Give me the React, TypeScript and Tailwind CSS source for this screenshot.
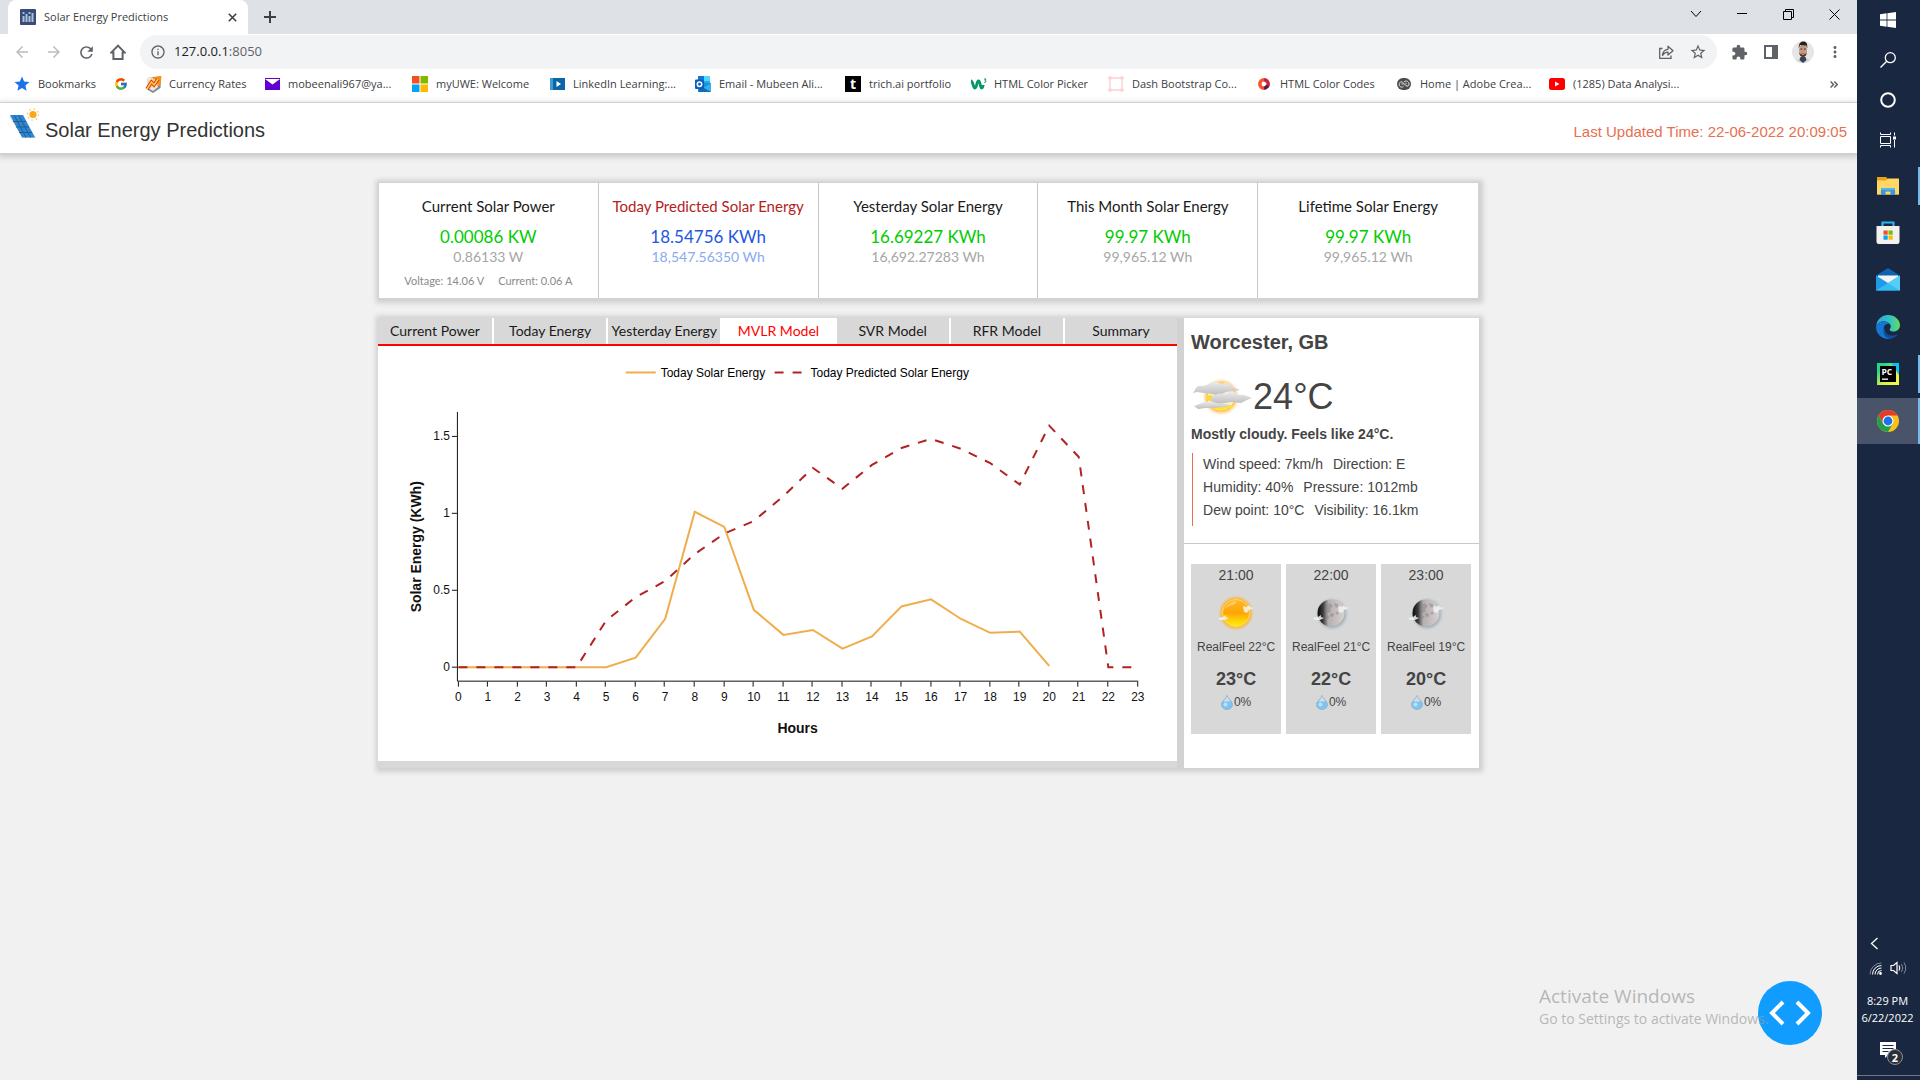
import React from "react";
import { FcGoogle } from "react-icons/fc";
import {
  MdArrowBack,
  MdArrowForward,
  MdExtension,
  MdInfoOutline,
  MdMoreVert,
  MdRefresh,
  MdStar,
  MdStarBorder,
} from "react-icons/md";

/* ---------- Browser icons ---------- */

const DashFavicon = () => (
  <svg width="16" height="16" viewBox="0 0 16 16">
    <rect width="16" height="16" rx="1" fill="#3b4a76" />
    <g fill="#a9c4dc">
      <rect x="2.5" y="7" width="2" height="6" />
      <rect x="5.5" y="5" width="2" height="8" />
      <rect x="8.5" y="7" width="2" height="6" />
      <rect x="11.5" y="4" width="2" height="9" />
    </g>
    <g fill="#7fd0d8">
      <rect x="2.5" y="3" width="2" height="2" />
      <rect x="8.5" y="3" width="2" height="2" />
    </g>
  </svg>
);

const HomeIcon = () => (
  <svg width="16" height="16" viewBox="0 0 16 16" fill="none" stroke="#5f6368" strokeWidth="2">
    <path d="M1.200 8.600 8 1.600l6.800 7H12.600V15H3.400V8.600Z" strokeLinejoin="miter" />
  </svg>
);

const ShareIcon = () => (
  <svg width="16" height="16" viewBox="0 0 16 16" fill="none" stroke="#5f6368" strokeWidth="1.3">
    <path d="M4.500 4.500H1.700V14.300H13V11.500" />
    <path d="M4.500 11.500C4.800 7.500 7 5.500 10 5.300V2.200L15 6.700 10 11V8.100C7.500 8 6 9 4.500 11.500Z" strokeLinejoin="round" />
  </svg>
);

const SidePanelIcon = () => (
  <svg width="14" height="14" viewBox="0 0 14 14">
    <path d="M0 0h14v14H0zM2 2v10h6V2z" fill="#5f6368" fillRule="evenodd" />
  </svg>
);

const Avatar = () => (
  <svg width="22" height="22" viewBox="0 0 22 22">
    <defs>
      <clipPath id="avatarClip"><circle cx="11" cy="11" r="11" /></clipPath>
    </defs>
    <g clipPath="url(#avatarClip)">
      <rect width="22" height="22" fill="#e6e6e8" />
      <path d="M3 22c1-4 4-5 8-5s7 1 8 5z" fill="#d5d8e0" />
      <path d="M8.500 16h5l1 3-3.500 3-3.500-3z" fill="#3b4152" />
      <ellipse cx="11" cy="9.500" rx="4" ry="6.500" fill="#c69a82" />
      <path d="M6.800 7.500C6.500 2 9 .500 11.500.500 14.500.500 15.700 3 15.200 7.500L14.200 4.500 8 4z" fill="#26211f" />
      <path d="M7.200 11.500c.3 6 7.300 6 7.600 0l-1.500 1.700q-2.300-1.400-4.600 0z" fill="#4a3730" />
      <path d="M8.500 8h1.700M12 8h1.700" stroke="#3a2a24" />
      <path d="M9.700 13.500h2.600" stroke="#c48a78" strokeWidth="1" />
    </g>
  </svg>
);

/* ---------- Bookmark icons ---------- */

const RatesIcon = () => (
  <svg width="17" height="17" viewBox="0 0 17 17">
    <path d="M2 2 16 .500 15.500 12 8 17l-5-3z" fill="#7f8b8c" />
    <path d="M1.500 2 13 1.500 13 11l-5 4-5-3z" fill="#f1e6d6" />
    <path d="m7 1 9.500-1-1 9-3 1z" fill="#f4921c" />
    <path d="M3 4.500 10 3l3 6-5 1-4 3z" fill="#f7c9a0" />
    <path d="m2 13 4.500-7 2.500 3 4-6" fill="none" stroke="#d8301c" strokeWidth="3.400" />
    <path d="m2 13 4.500-7 2.500 3 4-6" fill="none" stroke="#ffd23c" strokeWidth="1.600" />
  </svg>
);
const MailPurple = () => (
  <svg width="15" height="12" viewBox="0 0 15 12"><path d="M0 0h15v12H0z" fill="#5f01d1" /><path d="M0 1h15L7.500 6.500z" fill="#fff" /></svg>
);
const MicrosoftIcon = () => (
  <svg width="16" height="16" viewBox="0 0 16 16">
    <path d="M0 0h7.500v7.500H0z" fill="#f25022" /><path d="M8.500 0H16v7.500H8.500z" fill="#7fba00" />
    <path d="M0 8.500h7.500V16H0z" fill="#00a4ef" /><path d="M8.500 8.500H16V16H8.500z" fill="#ffb900" />
  </svg>
);
const LearningIcon = () => (
  <svg width="15" height="12" viewBox="0 0 15 12"><rect width="15" height="12" fill="#3f9bd0" /><rect x="3" width="12" height="12" fill="#0a66a8" /><path d="M6.500 3v6L11 6z" fill="#fff" /></svg>
);
const OutlookIcon = () => (
  <svg width="16" height="16" viewBox="0 0 16 16">
    <path d="M3 0h12v11H3z" fill="#28a8ea" /><path d="M9 0h6v5H9z" fill="#50d9ff" /><path d="M3 0h6v4H3z" fill="#0f78d4" />
    <path d="M3 7h13v9H3z" fill="#1490df" /><path d="m16 7-8 5-4-3v7h12z" fill="#35b0ee" /><path d="m4 9 12 7H4z" fill="#0f6cbd" />
    <rect y="3.500" width="9" height="9.500" rx="1" fill="#0a5ebd" /><circle cx="4.500" cy="8.200" r="2.200" fill="none" stroke="#fff" strokeWidth="1.500" />
  </svg>
);
const TrichIcon = () => (
  <span className="flex size-4 items-center justify-center bg-black font-['Open_Sans',sans-serif] text-sm leading-4 font-bold text-white">t</span>
);
const W3Icon = () => (
  <svg width="17" height="12" viewBox="0 0 17 12" fill="none" stroke="#059862">
    <path d="M1 3c2 0 2 7 4 7s1.500-7 3.500-7 1.500 7 3 7 1.500-2 1.500-3" strokeWidth="2.800" /><path d="M14 1h2l-1 1.500c2 0 1 2.500-1 1.700" strokeWidth="1" />
  </svg>
);
const DbcIcon = () => (
  <svg width="16" height="16" viewBox="0 0 16 16" fill="#fbd0cd">
    <path d="M2 2h12v12H2z" fill="none" stroke="#fbd0cd" strokeWidth="1.300" />
    <circle cx="2" cy="2" r="1.800" /><circle cx="14" cy="2" r="1.800" /><circle cx="2" cy="14" r="1.800" /><circle cx="14" cy="14" r="1.800" />
  </svg>
);
const ColorCodesIcon = () => (
  <svg width="12" height="12" viewBox="0 0 12 12" fill="none" strokeWidth="3.500">
    <path d="M6 1.800a4.200 4.200 0 0 0 0 8.400" stroke="#f4572f" /><path d="M6 1.800a4.200 4.200 0 0 1 3 7.100" stroke="#c5283a" /><path d="M9.500 7.500A4.200 4.200 0 0 1 6 10.200" stroke="#5b1a4a" />
  </svg>
);
const CreativeIcon = () => (
  <svg width="14" height="12" viewBox="0 0 14 12" fill="none">
    <rect width="14" height="12" rx="6" fill="#4b4b4b" />
    <path d="M6.500 8.700C3.500 10 2 8 2.200 6S4.500 3 6.500 5L9 7.700c1.500 1.200 3 0 3-1.900S9.500 2 7.200 3.700" stroke="#e8e8e8" /><path d="M4.200 6.200c1-1 1.800 0 2.600 1M10 6.200c-1-1-1.800-1-1.800-1" stroke="#e8e8e8" strokeWidth=".8" />
  </svg>
);
const YoutubeIcon = () => (
  <svg width="16" height="12" viewBox="0 0 16 12"><rect width="16" height="12" rx="2.500" fill="#f00" /><path d="M6 3.500v5L10.500 6z" fill="#fff" /></svg>
);

const bookmarks: { label: string; icon: React.ReactNode; width: string }[] = [
  { label: "Bookmarks", icon: <MdStar size={18} color="#1a73e8" />, width: "w-[99px]" },
  { label: "", icon: <FcGoogle size={14} />, width: "w-8" },
  { label: "Currency Rates", icon: <RatesIcon />, width: "w-[119px]" },
  { label: "mobeenali967@ya...", icon: <MailPurple />, width: "w-[148px]" },
  { label: "myUWE: Welcome", icon: <MicrosoftIcon />, width: "w-[137px]" },
  { label: "LinkedIn Learning:...", icon: <LearningIcon />, width: "w-[146px]" },
  { label: "Email - Mubeen Ali...", icon: <OutlookIcon />, width: "w-[150px]" },
  { label: "trich.ai portfolio", icon: <TrichIcon />, width: "w-[125px]" },
  { label: "HTML Color Picker", icon: <W3Icon />, width: "w-[138px]" },
  { label: "Dash Bootstrap Co...", icon: <DbcIcon />, width: "w-[148px]" },
  { label: "HTML Color Codes", icon: <ColorCodesIcon />, width: "w-[140px]" },
  { label: "Home | Adobe Crea...", icon: <CreativeIcon />, width: "w-[153px]" },
  { label: "(1285) Data Analysi...", icon: <YoutubeIcon />, width: "w-[150px]" },
];

function BrowserChrome() {
  return (
    <div className="font-['Open_Sans','Noto_Sans',sans-serif] text-[11px] text-[#3c4043]">
      <div className="flex h-[34px] bg-[#dee1e6] pl-2">
        <div className="flex w-60 items-center rounded-t-lg bg-white pr-2 pl-3">
          <DashFavicon />
          <span className="ml-2 flex-1 whitespace-nowrap">Solar Energy Predictions</span>
          <button aria-label="Close tab" className="flex size-4 items-center justify-center">
            <svg width="9" height="9" viewBox="0 0 9 9" stroke="#3c4043" strokeWidth="1.600"><path d="m.8.800 7.400 7.400M8.200.800.800 8.200" /></svg>
          </button>
        </div>
        <button aria-label="New tab" className="ml-4 flex items-center">
          <svg width="12" height="12" viewBox="0 0 12 12" stroke="#3c4043" strokeWidth="2"><path d="M6 0v12M0 6h12" /></svg>
        </button>
        <div className="ml-auto flex h-7 items-center text-black">
          <button aria-label="Search tabs" className="flex w-[46px] justify-center">
            <svg width="12" height="8" viewBox="0 0 12 8" fill="none" stroke="currentColor"><path d="m1 1 5 5.500L11 1" /></svg>
          </button>
          <button aria-label="Minimize" className="flex w-[46px] justify-center">
            <svg width="10" height="2" viewBox="0 0 10 2" fill="currentColor"><path d="M0 0h10v1H0z" /></svg>
          </button>
          <button aria-label="Restore" className="flex w-[46px] justify-center">
            <svg width="11" height="11" viewBox="0 0 11 11" fill="none" stroke="currentColor"><path d="M.5 2.500h8v8h-8zM2.500 2.500v-2h8v8h-2" /></svg>
          </button>
          <button aria-label="Close" className="flex w-[46px] justify-center">
            <svg width="11" height="11" viewBox="0 0 11 11" stroke="currentColor"><path d="m.5.500 10 10M10.500.500l-10 10" /></svg>
          </button>
        </div>
      </div>

      <div className="flex h-9 items-center bg-white pr-[13px] text-[#5f6368]">
        <div className="flex w-[140px] items-center pl-[13px]">
          <button aria-label="Back" className="w-8 text-[#babcbe]"><MdArrowBack size={18} /></button>
          <button aria-label="Forward" className="w-8 text-[#babcbe]"><MdArrowForward size={18} /></button>
          <button aria-label="Reload" className="w-[33px]"><MdRefresh size={19} /></button>
          <button aria-label="Home"><HomeIcon /></button>
        </div>
        <div className="flex h-[34px] flex-1 items-center rounded-full bg-[#f1f3f4] pr-2.5 pl-2.5">
          <MdInfoOutline size={16} />
          <label htmlFor="address" className="ml-2 text-[13px] text-[#202124]">127.0.0.1</label>
          <input id="address" defaultValue=":8050" className="min-w-0 flex-1 text-[13px] outline-none" />
          <button aria-label="Share" className="mr-[15px]"><ShareIcon /></button>
          <button aria-label="Bookmark this page"><MdStarBorder size={18} /></button>
        </div>
        <button aria-label="Extensions" className="ml-3.5"><MdExtension size={17} /></button>
        <button aria-label="Side panel" className="ml-4"><SidePanelIcon /></button>
        <button aria-label="Profile" className="ml-3.5"><Avatar /></button>
        <button aria-label="Menu" className="ml-3"><MdMoreVert size={18} /></button>
      </div>

      <nav aria-label="Bookmarks" className="flex h-[33px] items-center border-b border-[#d6d8db] bg-white pr-[19px] pb-1 pl-[13px]">
        {bookmarks.map((b) => (
          <a key={b.width + b.label} href="#bookmark" aria-label={b.label || "Google"} className={"flex shrink-0 items-center gap-[7px] whitespace-nowrap " + b.width}>
            <span className="flex w-[18px] shrink-0 justify-center">{b.icon}</span>
            {b.label}
          </a>
        ))}
        <button aria-label="More bookmarks" className="ml-auto text-[#5f6368]">
          <svg width="8" height="7" viewBox="0 0 8 7" fill="none" stroke="currentColor" strokeWidth="1.500"><path d="m.6.500 2.900 3-2.900 3M4.300.500l2.900 3-2.900 3" /></svg>
        </button>
      </nav>
    </div>
  );
}

/* ---------- Page header ---------- */

const SolarLogo = () => (
  <svg width="30" height="36" viewBox="0 0 30 36">
    <path d="M0 9h14l13 22H14z" fill="#d9e3ea" />
    <path d="M1 8h13l12 22.500H13z" fill="#2f86cc" />
    <path d="M5 8 17 30.500M9.500 8l12 22.500M4 14.500h13M7 20h13M10 25.500h13" stroke="#1f5e99" strokeWidth="1" />
    <circle cx="24" cy="7.500" r="3.600" fill="#fba919" />
    <circle cx="24" cy="7.500" r="5.600" stroke="#fbc56a" strokeWidth="1.400" strokeDasharray="1.400 3" fill="none" />
  </svg>
);

function PageHeader() {
  return (
    <header className="relative flex h-[50px] items-center bg-white pr-2.5 pl-[9px] font-['Liberation_Sans',sans-serif] shadow-[0_2px_6px_2px_#c8c8c8]">
      <div className="mb-1.5 flex"><SolarLogo /></div>
      <h1 className="mt-1 ml-1.5 flex-1 text-xl leading-6 text-[#333]">Solar Energy Predictions</h1>
      <p className="mt-2 text-[15px] leading-6 text-[#e76f51]">Last Updated Time: 22-06-2022 20:09:05</p>
    </header>
  );
}

/* ---------- Summary cards ---------- */

const stats = [
  { title: "Current Solar Power", tone: "text-[#1a1a1a]", value: "0.00086 KW", valueTone: "text-[#00cc00]", sub: "0.86133 W", subTone: "text-[#a6a6a6]", extra: true },
  { title: "Today Predicted Solar Energy", tone: "text-[#b22222]", value: "18.54756 KWh", valueTone: "text-[#1e56e0]", sub: "18,547.56350 Wh", subTone: "text-[#8aaaf0]" },
  { title: "Yesterday Solar Energy", tone: "text-[#1a1a1a]", value: "16.69227 KWh", valueTone: "text-[#00cc00]", sub: "16,692.27283 Wh", subTone: "text-[#a6a6a6]" },
  { title: "This Month Solar Energy", tone: "text-[#1a1a1a]", value: "99.97 KWh", valueTone: "text-[#00cc00]", sub: "99,965.12 Wh", subTone: "text-[#a6a6a6]" },
  { title: "Lifetime Solar Energy", tone: "text-[#1a1a1a]", value: "99.97 KWh", valueTone: "text-[#00cc00]", sub: "99,965.12 Wh", subTone: "text-[#a6a6a6]" },
];

function SummaryCards() {
  return (
    <section className="grid grid-cols-5 border border-[#d2d2d2] bg-white font-['Lato','Open_Sans',sans-serif] shadow-[1px_1px_5px_3px_#cfcfcf]">
      {stats.map((s) => (
        <article key={s.title} className="flex h-[115px] flex-col items-center border-r border-[#c8c8c8] pt-3 whitespace-nowrap last:border-r-0">
          <h2 className={"text-[15px] leading-[22px] " + s.tone}>{s.title}</h2>
          <p className={"mt-2 text-[17px] leading-6 " + s.valueTone}>{s.value}</p>
          <p className={"text-sm leading-4 " + s.subTone}>{s.sub}</p>
          {s.extra && (
            <p className="mt-2 flex gap-3.5 text-[11px] leading-4 text-[#8a8a8a]">
              <span>Voltage: 14.06 V</span>
              <span>Current: 0.06 A</span>
            </p>
          )}
        </article>
      ))}
    </section>
  );
}

/* ---------- Chart ---------- */

const actual = [0, 0, 0, 0, 0, 0, 0.062, 0.314, 1.01, 0.912, 0.373, 0.21, 0.242, 0.121, 0.2, 0.395, 0.441, 0.315, 0.223, 0.231, 0.008];
const predicted = [0, 0, 0, 0, 0, 0.303, 0.455, 0.56, 0.735, 0.868, 0.95, 1.112, 1.295, 1.16, 1.315, 1.425, 1.484, 1.42, 1.327, 1.187, 1.57, 1.366, 0, 0];
const px = (hour: number) => 80.5 + hour * 29.57;
const py = (kwh: number) => 321.5 - kwh * 154;
const toPoints = (values: number[]) => values.map((v, i) => `${px(i)},${py(v)}`).join(" ");

function EnergyChart() {
  return (
    <svg viewBox="0 0 800 415" className="block w-full bg-white font-['Liberation_Sans',sans-serif]" fill="#111" role="img" aria-label="Solar energy by hour">
      <g strokeWidth="2" fontSize="12">
        <path d="M248 26.500h30" stroke="#f0ad4e" />
        <text x="283" y="31" fill="#000">Today Solar Energy</text>
        <path d="M397 26.500h30" stroke="#b22222" strokeDasharray="9 9" />
        <text x="433" y="31" fill="#000">Today Predicted Solar Energy</text>
      </g>
      <path d="M79.500 66v269.500H761" fill="none" stroke="#111" />
      <g stroke="#111">
        {[0, 0.5, 1, 1.5].map((v) => <path key={v} d={`M74 ${Math.round(py(v)) - 0.5}h5`} />)}
        {predicted.map((_, i) => <path key={i} d={`M${Math.round(px(i)) - 0.5} 336v5`} />)}
      </g>
      <g fontSize="12" textAnchor="end">
        {[0, 0.5, 1, 1.5].map((v) => <text key={v} x="72" y={py(v) + 4}>{v}</text>)}
      </g>
      <g fontSize="12" textAnchor="middle">
        {predicted.map((_, i) => <text key={i} x={px(i)} y="355">{i}</text>)}
      </g>
      <polyline points={toPoints(actual)} fill="none" stroke="#f0ad4e" strokeWidth="2" />
      <polyline points={toPoints(predicted)} fill="none" stroke="#b22222" strokeWidth="2" strokeDasharray="9 9" />
      <g fontSize="14" fontWeight="bold" textAnchor="middle">
        <text x="420" y="387">Hours</text>
        <text transform="translate(43 201) rotate(-90)">Solar Energy (KWh)</text>
      </g>
    </svg>
  );
}

const tabs = ["Current Power", "Today Energy", "Yesterday Energy", "MVLR Model", "SVR Model", "RFR Model", "Summary"];

function ChartPanel() {
  return (
    <section className="min-w-0 flex-1 bg-[#d8d8d8] pb-[7px]">
      <div role="tablist" className="grid grid-cols-7 border-b-2 border-[#ff0000] font-['Lato','Open_Sans',sans-serif] text-sm">
        {tabs.map((t) => {
          const on = t === "MVLR Model";
          return (
            <button key={t} role="tab" aria-selected={on} className={"h-[26px] border-l-2 border-white whitespace-nowrap first:border-l-0 " + (on ? "bg-white text-[#ff0000]" : "bg-[#d8d8d8] text-[#1a1a1a]")}>
              {t}
            </button>
          );
        })}
      </div>
      <EnergyChart />
    </section>
  );
}

/* ---------- Weather ---------- */

const CloudySun = () => (
  <svg width="60" height="38" viewBox="0 0 60 38">
    <defs>
      <radialGradient id="glow"><stop offset=".72" stopColor="#ffb640" /><stop offset="1" stopColor="#ffe6b8" stopOpacity="0" /></radialGradient>
      <linearGradient id="cloud" x2="0" y2="1"><stop stopColor="#ececec" /><stop offset="1" stopColor="#bdbdbd" /></linearGradient>
      <filter id="soft"><feGaussianBlur stdDeviation=".6" /></filter>
    </defs>
    <circle cx="28" cy="19" r="19" fill="url(#glow)" />
    <circle cx="28" cy="19" r="13.500" fill="#fff1c4" />
    <path d="M16 27q12 10 25 0z" fill="#ffe81e" />
    <circle cx="17" cy="20" r="3" fill="#ffdb26" />
    <g fill="url(#cloud)" filter="url(#soft)">
      <path d="M2 11 5 8l4 0 5-1q8-6 14-1 7-3 11 3l8 3-14 2q-7 5-14 2l-8-1-7-1-4 1 2-3z" />
      <path d="M17 21q6-7 15-5 8-5 14 1l5 0 8 3-5 2-6 3-10-1-12 2-7-2z" />
      <path d="M1 28 6 26l5-2q6-1 12 1l8 1 8 1-6 2-12 1-8 0-8 1z" />
    </g>
  </svg>
);

const cloudWisps = (
  <g fill="#f4f4f4" opacity=".85">
    <path d="m1 24 5-1 3-2 0 2 3 1-4 2-5 0z" /><path d="m26 12 4 1 2-2 1 2 4 1-5 2-2 3-3-1z" />
  </g>
);
const SunIcon = () => (
  <svg width="38" height="38" viewBox="0 0 38 38">
    <defs>
      <radialGradient id="sunGlow"><stop offset=".72" stopColor="#ffa61f" /><stop offset="1" stopColor="#ffb84a" stopOpacity="0" /></radialGradient>
      <linearGradient id="sunFill" x2="0" y2="1"><stop stopColor="#ffb52a" /><stop offset=".5" stopColor="#ffa505" /><stop offset="1" stopColor="#fff308" /></linearGradient>
    </defs>
    <circle cx="19" cy="19" r="18" fill="url(#sunGlow)" /><circle cx="19" cy="19" r="13.500" fill="url(#sunFill)" stroke="#ffe04a" />
    <path d="M8 15q4-8 12-8-1 3-5 4-4 1-7 4z" fill="#ffe0a0" opacity=".6" />{cloudWisps}
  </svg>
);
const MoonIcon = () => (
  <svg width="38" height="38" viewBox="0 0 38 38">
    <defs>
      <radialGradient id="moonGlow"><stop offset=".72" stopColor="#9eabb8" /><stop offset="1" stopColor="#c4ccd2" stopOpacity="0" /></radialGradient>
      <linearGradient id="moonFill"><stop stopColor="#0c0c0c" /><stop offset=".2" stopColor="#3a3a3a" /><stop offset=".4" stopColor="#b4b0af" /><stop offset="1" stopColor="#d8d2d1" /></linearGradient>
    </defs>
    <circle cx="20" cy="20" r="17" fill="url(#moonGlow)" /><circle cx="19" cy="19" r="13.500" fill="url(#moonFill)" />
    <g fill="#8b8685" opacity=".5"><path d="m14 11 4-2 3 3-3 3 1 3-4 1-2-4zM22 9l4 1 1 4-4-1z" /><circle cx="20" cy="21" r="2" /><circle cx="16" cy="23" r="1.500" /><circle cx="25" cy="19" r="1.500" /></g>
    {cloudWisps}
  </svg>
);
const Drop = () => (
  <svg width="12" height="15" viewBox="0 0 12 15">
    <path d="M6 .500C7 4 11.500 6 11.500 9.500a5.500 5 0 0 1-11 0C.500 6 5 4 6 .500Z" fill="#7cc4f3" stroke="#8fa9ba" strokeWidth=".7" />
    <path d="M6 1C7 4 9 5 9.500 6.500H2.500C3 5 5 4 6 1Z" fill="#cfdde6" /><circle cx="4.500" cy="9.500" r="2" fill="#b6e2fb" />
  </svg>
);

const forecast = [
  { time: "21:00", icon: <SunIcon />, feel: "22", temp: "23" },
  { time: "22:00", icon: <MoonIcon />, feel: "21", temp: "22" },
  { time: "23:00", icon: <MoonIcon />, feel: "19", temp: "20" },
];

function WeatherPanel() {
  return (
    <aside className="w-[295px] shrink-0 bg-white font-['Liberation_Sans',sans-serif] text-sm text-[#444]">
      <div className="h-[226px] border-b border-[#c8c8c8] pt-3 pl-[7px]">
        <h2 className="text-xl leading-6 font-bold">Worcester, GB</h2>
        <div className="mt-5 flex h-[46px] items-center pl-0.5">
          <CloudySun />
          <span className="text-4xl leading-10">24°C</span>
        </div>
        <p className="mt-1 leading-5 font-bold">Mostly cloudy. Feels like 24°C.</p>
        <div className="mt-[9px] ml-px h-[73px] border-l border-[#e76f51] pl-2.5 leading-[23px]">
          <p className="flex gap-2.5"><span>Wind speed: 7km/h</span><span>Direction: E</span></p>
          <p className="flex gap-2.5"><span>Humidity: 40%</span><span>Pressure: 1012mb</span></p>
          <p className="flex gap-2.5"><span>Dew point: 10°C</span><span>Visibility: 16.1km</span></p>
        </div>
      </div>
      <div className="grid grid-cols-3 gap-[5px] py-5 pr-2 pl-[7px]">
        {forecast.map((f) => (
          <article key={f.time} className="flex h-[170px] flex-col items-center bg-[#d8d8d8] whitespace-nowrap">
            <h3 className="leading-[22px]">{f.time}</h3>
            <div className="mt-2">{f.icon}</div>
            <p className="mt-1.5 text-xs leading-[18px]">RealFeel {f.feel}°C</p>
            <p className="mt-3 text-lg leading-[22px] font-bold">{f.temp}°C</p>
            <p className="mt-1 flex items-center gap-px text-xs leading-4"><Drop />0%</p>
          </article>
        ))}
      </div>
    </aside>
  );
}

/* ---------- Taskbar ---------- */

const WindowsIcon = () => (
  <svg width="16" height="16" viewBox="0 0 16 16" fill="#fff"><path d="M0 2.200 6.600 1.300v6.300H0zM7.400 1.200 16 0v7.600H7.400zM0 8.400h6.600v6.300L0 13.800zM7.400 8.400H16V16l-8.600-1.200z" /></svg>
);
const SearchIcon = () => (
  <svg width="16" height="16" viewBox="0 0 16 16" fill="none" stroke="#fff" strokeWidth="1.300"><circle cx="10.300" cy="5.700" r="5" /><path d="M6.700 9.300.500 15.500" /></svg>
);
const CortanaIcon = () => (
  <svg width="16" height="16" viewBox="0 0 16 16" fill="none" stroke="#fff" strokeWidth="2"><circle cx="8" cy="8" r="6.800" /></svg>
);
const TaskViewIcon = () => (
  <svg width="16" height="16" viewBox="0 0 16 16" fill="none" stroke="#fff"><path d="M.5 4.500h10v7H.500zM.500.500v2h10v-2M.500 15.500v-2h10v2M14.500.500v3M14.500 8v7.500" /><path d="M13 4.500h3v3h-3z" fill="#fff" stroke="none" /></svg>
);
const ExplorerIcon = () => (
  <svg width="22" height="18" viewBox="0 0 22 18"><path d="M0 0h9l2 2h11v15.500H0z" fill="#e8a317" /><path d="M0 3.500h9l2-2h11v16H0z" fill="#ffd766" /><path d="M4 18v-7h14v7h-4.500v-3.500h-5V18z" fill="#3a96dd" /><path d="M4 11h14v2H4z" fill="#57b1ea" /></svg>
);
const StoreIcon = () => (
  <svg width="24" height="24" viewBox="0 0 24 24"><path d="M6.500 6V1.500h11V6" fill="none" stroke="#29b6ee" strokeWidth="2.200" /><path d="M.5 5h23v15.500a2.500 2.500 0 0 1-2.500 2.500H3A2.500 2.500 0 0 1 .500 20.500z" fill="#f1f1f1" /><path d="M7.500 9.500h4.200v4.200H7.500z" fill="#f25022" /><path d="M12.500 9.500h4.200v4.200h-4.200z" fill="#7fba00" /><path d="M7.500 14.500h4.200v4.200H7.500z" fill="#00a4ef" /><path d="M12.500 14.500h4.200v4.200h-4.200z" fill="#ffb900" /></svg>
);
const MailIcon = () => (
  <svg width="24" height="23" viewBox="0 0 24 23"><path d="M0 7.500 12 0l12 7.500V10H0z" fill="#0f62b0" /><path d="M2 7.500h20v5l-10 5-10-5z" fill="#f5f5f5" /><path d="M0 7.500 24 22.500H0z" fill="#1d9be8" /><path d="M24 7.500 0 22.500h24z" fill="#35bdf2" /><path d="M24 7.500v15L12 15z" fill="#58cef7" /></svg>
);
const EdgeIcon = () => (
  <svg width="24" height="24" viewBox="0 0 24 24">
    <defs><linearGradient id="edgeTop"><stop stopColor="#2aa8dc" /><stop offset=".6" stopColor="#37c4bd" /><stop offset="1" stopColor="#63dd58" /></linearGradient></defs>
    <path d="M.2 11C1 4 6 0 12 0c7 0 12 5 12 10 0 4-3 6.500-6.500 6.500-3 0-4.500-1.200-3.500-2.700 1-1.300 1-3 0-4.500C11 5 3 5 .200 11Z" fill="url(#edgeTop)" />
    <path d="M.2 11C3 5 11 5 13.700 9c-5-1-7 3-5.700 7 1.300 4 5 7.500 9 6.600-2 1-4 1.400-5.500 1.400C4.500 23.500-.800 17.500.200 11Z" fill="#1577d2" />
    <path d="M9 12.500c-1 5 3 8.500 8 8 3-.3 4-1 5.300-2.200C20 22 17.500 23.500 14 23.500 8 23 6 17 9 12.500Z" fill="#0c4f9d" />
  </svg>
);
const PycharmIcon = () => (
  <svg width="22" height="22" viewBox="0 0 22 22"><defs><linearGradient id="pcFill" x2="1" y2="1"><stop offset=".2" stopColor="#21d789" /><stop offset=".6" stopColor="#d9f04a" /><stop offset="1" stopColor="#fcf84a" /></linearGradient></defs><rect width="22" height="22" fill="url(#pcFill)" /><path d="M14 0h8v12z" fill="#07c3f2" /><rect x="3" y="3" width="16" height="16" fill="#000" /><text x="4.500" y="11.500" fontSize="8.500" fontWeight="bold" fill="#fff" fontFamily="Open Sans, sans-serif">PC</text><path d="M5 15.500h6v1.300H5z" fill="#fff" /></svg>
);
const ChromeIcon = () => (
  <svg width="22" height="22" viewBox="0 0 22 22"><circle cx="11" cy="11" r="11" fill="#fbc116" /><path d="M1.500 5.500A11 11 0 0 1 20.500 5.500H11L6.200 13.700z" fill="#e33b2e" /><path d="M1.500 5.500A11 11 0 0 0 11 22l4.800-8.300H6.200z" fill="#1fa04a" /><circle cx="11" cy="11" r="5.500" fill="#fff" /><circle cx="11" cy="11" r="4.400" fill="#1a73e8" /></svg>
);

const systemIcons = [
  { name: "Start", icon: <WindowsIcon /> },
  { name: "Search", icon: <SearchIcon /> },
  { name: "Cortana", icon: <CortanaIcon /> },
  { name: "Task View", icon: <TaskViewIcon /> },
];
const apps = [
  { name: "File Explorer", icon: <ExplorerIcon />, state: "h-[38px] border-r-2 border-[#76b9ed]" },
  { name: "Microsoft Store", icon: <StoreIcon />, state: "h-[38px] border-r-2 border-transparent" },
  { name: "Mail", icon: <MailIcon />, state: "h-[38px] border-r-2 border-transparent" },
  { name: "Edge", icon: <EdgeIcon />, state: "h-[38px] border-r-2 border-transparent" },
  { name: "PyCharm", icon: <PycharmIcon />, state: "h-[38px] border-r-2 border-[#76b9ed]" },
  { name: "Chrome", icon: <ChromeIcon />, state: "h-[46px] border-r-2 border-[#76b9ed] bg-[#49546a]" },
];

function Taskbar() {
  return (
    <aside className="relative z-10 flex w-[63px] shrink-0 flex-col bg-[#1a2740] font-['Open_Sans','Noto_Sans',sans-serif] text-white">
      {systemIcons.map((s) => (
        <button key={s.name} aria-label={s.name} className="flex h-10 items-center justify-center pr-px">{s.icon}</button>
      ))}
      <div className="mt-0.5 flex flex-col">
        {apps.map((a) => (
          <div key={a.name} className="flex h-[47px] flex-col justify-center">
            <button aria-label={a.name} className={"flex items-center justify-center " + a.state}>{a.icon}</button>
          </div>
        ))}
      </div>
      <div className="mt-auto flex flex-col border-b border-[#6e7686] text-center text-[11px] leading-[17px]">
        <button aria-label="Show hidden icons" className="flex pl-[13px]">
          <svg width="9" height="13" viewBox="0 0 9 13" fill="none" stroke="#fff" strokeWidth="1.300"><path d="m7.500 1-6 5.500 6 5.500" /></svg>
        </button>
        <div className="mt-2.5 flex h-4 items-center justify-center gap-2 pr-0.5">
          <svg width="13" height="14" viewBox="0 0 13 14" fill="none" stroke="#fff">
            <path d="M1 13.500A11.500 11.500 0 0 1 12.500 2" opacity=".45" /><path d="M3.500 13.500a9 9 0 0 1 9-9M6 13.500A6.500 6.500 0 0 1 12.500 7M8.500 13.500a4 4 0 0 1 4-4" /><circle cx="11.500" cy="12.500" r="1.400" fill="#fff" stroke="none" />
          </svg>
          <svg width="17" height="14" viewBox="0 0 17 14" fill="none" stroke="#fff">
            <path d="M1 4.500h2.500L7 1.500v11L3.500 9.500H1z" strokeWidth="1.200" /><path d="M9 4.500q1.500 2.500 0 5" strokeWidth="1.200" /><path d="M11.500 3q2.500 4 0 8M14 1.500q3.500 5.500 0 11" opacity=".45" />
          </svg>
        </div>
        <p className="mt-4 pr-0.5">8:29 PM</p>
        <p className="pr-0.5">6/22/2022</p>
        <div className="relative mt-4 mb-2.5 ml-[23px] h-[23px] w-4">
          <svg width="16" height="16" viewBox="0 0 16 16"><path d="M0 0h16v13H8l-3 3v-3H0z" fill="#fff" /><path d="M2.500 3.500h11M2.500 6.500h11M2.500 9.500h6" stroke="#1a2740" /></svg>
          <span className="absolute top-[7px] left-[7px] flex size-4 items-center justify-center rounded-full border border-[#8b8f98] bg-[#2b2f38] text-[11px] font-bold">2</span>
        </div>
      </div>
      <div className="h-1" />
    </aside>
  );
}

export default function App() {
  return (
    <div className="flex min-h-screen bg-[#f1f1f1]">
      <div className="relative min-w-0 flex-1">
        <BrowserChrome />
        <PageHeader />
        <main className="mx-auto mt-[29px] w-[59.3%]">
          <SummaryCards />
          <div className="mt-[19px] flex gap-[7px] bg-[#d2d2d2] shadow-[1px_1px_5px_3px_#cfcfcf]">
            <ChartPanel />
            <WeatherPanel />
          </div>
        </main>
        <button aria-label="Toggle debug menu" className="absolute right-[35px] bottom-[35px] flex size-16 items-center justify-center rounded-full bg-[#119dff]">
          <svg width="42" height="26" viewBox="0 0 42 26" fill="none" stroke="#fff" strokeWidth="4"><path d="M14 2 3 13l11 11M28 2l11 11-11 11" /></svg>
        </button>
        <div className="pointer-events-none absolute right-[82px] bottom-[50px] w-[236px] font-['Open_Sans','Noto_Sans',sans-serif] whitespace-nowrap text-[#9c9c9c]/70">
          <p className="text-[19px] leading-6">Activate Windows</p>
          <p className="text-sm leading-[22px]">Go to Settings to activate Windows.</p>
        </div>
      </div>
      <Taskbar />
    </div>
  );
}
